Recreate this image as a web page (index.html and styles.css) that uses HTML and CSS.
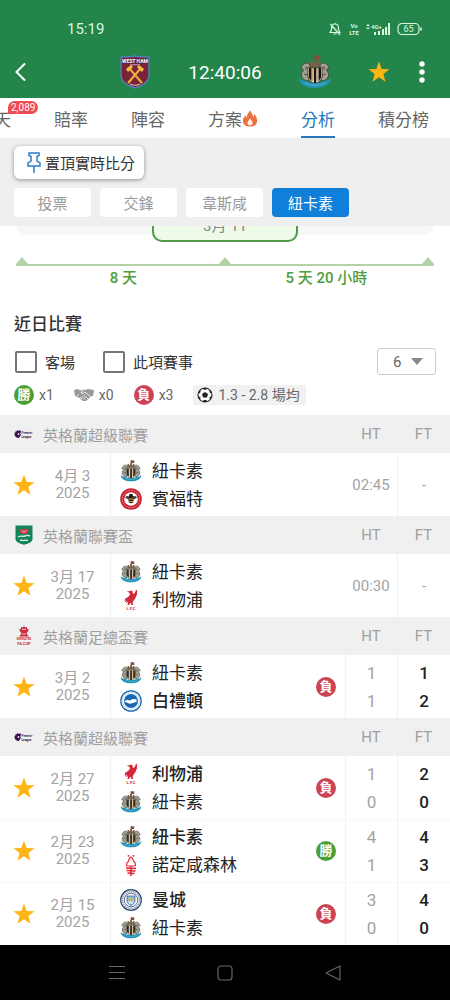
FILE: index.html
```html
<!DOCTYPE html>
<html lang="zh-Hant">

<head>
  <meta charset="UTF-8">
  <meta name="viewport" content="width=device-width, initial-scale=1.0">
  <title>分析</title>
  <link rel="stylesheet" href="styles.css">
</head>

<body>
  <!-- shared icons -->
  <svg class="sprite" aria-hidden="true">
    <symbol id="star" viewBox="0 0 24 24">
      <path d="M12 1.5l2.7 7.4 7.8.3-6.1 4.9 2.1 7.6-6.5-4.4-6.5 4.4 2.1-7.6L1.500 9.200l7.800-.3z" fill="#fdb515" />
    </symbol>

    <symbol id="newcastle" viewBox="0 0 34 34">
      <path d="M17 9V1" stroke="#6d4b32" stroke-width="1.200" />
      <path d="M17 0l6 1-1.500 2 1 1.500L17 5z" fill="#8b4a3a" />
      <path d="M11.500 12V6h2.500v2h1.500V5h3v3H20V6h2.500v6z" fill="#77604a" />
      <path d="M10 26C3 25 2 19 5 16c1-2-1-3-2-2 0-4 5-8 8-5 3 2-1 6 0 9 1 2 2 5-1 8z" fill="#a3a093" stroke="#4c4a42" stroke-width="1" />
      <path d="M24 26c7-1 8-7 5-10-1-2 1-3 2-2 0-4-5-8-8-5-3 2 1 6 0 9-1 2-2 5 1 8z" fill="#a3a093" stroke="#4c4a42" stroke-width="1" />
      <path d="M7 12l2 1-2 2M27 12l-2 1 2 2M6 19l4 1M28 19l-4 1" stroke="#5b4d31" fill="none" />
      <path d="M10 12c5 1 9 1 14 0v9c0 4-3 6-7 8-4-2-7-4-7-8z" fill="#efe5d0" stroke="#222" stroke-width=".8" />
      <path d="M11 13h2.500v13L11 23zM15.800 13h2.500v15h-2.500zM20.500 13H23v10l-2.500 3z" fill="#181512" />
      <path d="M14.600 13v13M19.400 13v13" stroke="#c9924b" stroke-width=".8" />
      <path d="M1 23c2 2 4 3 7 3 5 3 13 3 18 0 3 0 5-1 7-3l-1 4-3 3c-7 4-17 4-24 0l-3-3z" fill="#2493b8" />
      <path d="M7 28c6 3 14 3 20 0" stroke="#8bd3e8" stroke-width=".8" stroke-dasharray="1.500 1" fill="none" />
    </symbol>

    <symbol id="westham" viewBox="0 0 30 34">
      <path d="M1 2c4 0 10 0 14-1 4 1 10 1 14 1v18c0 6-6 11-14 13C7 31 1 26 1 20z" fill="#7a2338" stroke="#4d82b4" stroke-width="1.400" />
      <path d="M2.500 3.500h25V9h-25z" fill="#5b2948" />
      <text x="15" y="8" text-anchor="middle" class="crest-text" fill="#fff">WEST HAM</text>
      <path d="M9 13l13 15M21 13L8 28" stroke="#e9b33c" stroke-width="2" />
      <path d="M6 14l5-4 2 2-5 5zM24 14l-5-4-2 2 5 5z" fill="#f0bd46" />
      <path d="M10 9.800h10" stroke="#d9c5cf" stroke-width=".8" />
      <path d="M10 29c3 1.500 7 1.500 10 0" stroke="#d9b9c2" stroke-width="1.200" fill="none" />
    </symbol>

    <symbol id="brentford" viewBox="0 0 22 22">
      <circle cx="11" cy="11" r="10.800" fill="#c8202f" />
      <circle cx="11" cy="11" r="8.700" fill="none" stroke="#efa9ad" stroke-width=".9" stroke-dasharray="1.200 .8" />
      <circle cx="11" cy="11" r="6.800" fill="#fff" />
      <path d="M5 9c2-2 5-1 6 1 1-2 4-3 6-1-1 2-4 3-6 2-2 1-5 0-6-2z" fill="#4b4542" />
      <path d="M9 8c0-3 4-3 4 0l.5 5c0 3-5 3-5 0z" fill="#211c1a" />
      <path d="M9 11h4M9 13.500h4" stroke="#e9a32c" stroke-width="1" />
    </symbol>

    <!-- liver bird -->
    <symbol id="liverpool" viewBox="0 0 22 22">
      <path d="M8.500 3l2-1.500 2 .8.500 2.700c1.500-.5 2.500-2 3-4.500l1 1-.2 3.500-1.300 4-2.500 3.500-.5 2 .8 1.500h-2l-.5-2-1.300.5-.2 1.500h-2l.8-2-1.100-1.500-1.500-1 1-2.500 2-1.500 1.500-2-.5-1.500z" fill="#d3283a" />
      <path d="M17 2.500l-2.500 4M17 5l-3 3.500M7.500 2.500l2 .5M6 9l-1 3 2 2" stroke="#d3283a" fill="none" stroke-width=".9" />
      <text x="11" y="21" text-anchor="middle" class="lfc-text" fill="#d3283a">L.F.C</text>
    </symbol>

    <symbol id="brighton" viewBox="0 0 22 22">
      <circle cx="11" cy="11" r="10.800" fill="#1464ae" />
      <circle cx="11" cy="11" r="9.600" fill="#fff" />
      <circle cx="11" cy="11" r="8.300" fill="none" stroke="#7eaed9" stroke-width="1" stroke-dasharray="1 .8" />
      <circle cx="11" cy="11" r="7" fill="#1767b4" />
      <path d="M4.500 11l3-1.200c2 1 3 .8 4-.3 2-1 4-.7 6 .2l-2 .8 2 1-3 1c-3 1.500-6 1.500-8 0l-2-1z" fill="#fff" />
    </symbol>

    <symbol id="forest" viewBox="0 0 22 22">
      <circle cx="8.500" cy="1.800" r=".9" fill="#de2530" />
      <circle cx="13.500" cy="1.800" r=".9" fill="#de2530" />
      <path d="M11 3c2 1 2 3 3 5 2 1 2 4 0 4H8c-2 0-2-3 0-4 1-2 1-4 3-5z" fill="#fff" stroke="#de2530" stroke-width="1.200" />
      <path d="M6 13.500c3-1 7 1 10 0v1.500c-3 1-7-1-10 0zM6.500 16c3-1 6 1 9 0v1.500c-3 1-6-1-9 0zM7.500 18.500c2-.6 5 .6 7 0V20c-2 .6-5-.6-7 0z" fill="#de2530" />
      <path d="M11 12.500V22" stroke="#de2530" stroke-width="1.500" />
    </symbol>

    <symbol id="mancity" viewBox="0 0 22 22">
      <circle cx="11" cy="11" r="10.300" fill="#fff" stroke="#29456f" stroke-width="1.200" />
      <circle cx="11" cy="11" r="8.500" fill="none" stroke="#8397b5" stroke-width="1.400" stroke-dasharray="1.400 .7" />
      <circle cx="11" cy="11" r="6.800" fill="#fff" stroke="#29456f" stroke-width=".8" />
      <path d="M7 7h8v5c0 2-2 3.500-4 4.500C9 15.500 7 14 7 12z" fill="#8bbfe2" stroke="#35517b" stroke-width=".7" />
      <path d="M8 9.500h6L13 12H9z" fill="#d7b650" />
      <path d="M8 12.500l5 2M14 12.500l-5 2" stroke="#fff" stroke-width=".8" />
    </symbol>

    <symbol id="premier" viewBox="0 0 40 20">
      <path d="M2 3l3 2 2-3 3 2 3-2 1 5-2 1 2 3-4 7C5 18 1 15 1 10c0-2 1-4 3-4z" fill="#3a1149" />
      <path d="M7 9l3-1 1 3-3 1z" fill="#fff" />
      <text x="15" y="9" class="league-text" fill="#3a1149">Premier</text>
      <text x="15" y="17" class="league-text" fill="#3a1149">League</text>
    </symbol>

    <symbol id="carabao" viewBox="0 0 20 20">
      <path d="M1.500.5h17V14c0 3-4 4.500-8.500 5.700C5.500 18.500 1.500 17 1.500 14z" fill="#11845a" />
      <path d="M5 3.500l2 .7h6l2-.7-1 4-2 1.500H8L6 7.500z" fill="#d83a43" />
      <path d="M8 5.500l2 2 2-2" stroke="#fff" fill="none" stroke-width=".8" />
      <path d="M4 12c3-2 5 0 7-1s3-1 5 0M6 15.500c2-1 3 .5 4 0s2-.5 4 0" stroke="#d3ebe1" stroke-width="1.400" fill="none" />
    </symbol>

    <symbol id="facup" viewBox="0 0 40 40">
      <path d="M20 0l2 3 4-1v4l4 1-3 5-2 2 2 4 3 3H10l3-3 2-4-2-2-3-5 4-1V2l4 1z" fill="#cb2b3b" />
      <path d="M16 7h8M16 16h8" stroke="#fff" stroke-width="1.400" />
      <text x="20" y="28" text-anchor="middle" class="facup-small" fill="#cb2b3b">EMIRATES</text>
      <text x="20" y="37" text-anchor="middle" class="facup-text" fill="#cb2b3b">FA CUP</text>
    </symbol>
  </svg>

  <header class="top">
    <div class="status">
      <span>15:19</span>
      <div class="status-icons">
        <svg width="14" height="14" viewBox="0 0 14 14" fill="none" stroke="#d9f7e0" stroke-width="1.200">
          <path d="M7 2c-2.500 0-3.500 2-3.500 4v2L2 10.500h10L10.500 8V6C10.500 4 9.500 2 7 2zM7 2V1M5.500 12h3M2.500 2l9.500 11" />
        </svg>
        <svg width="12" height="16" viewBox="0 0 12 16" fill="#d9f7e0">
          <text x="6" y="7" text-anchor="middle" class="status-text">Vo</text>
          <text x="6" y="14" text-anchor="middle" class="status-text">LTE</text>
        </svg>
        <svg width="25" height="14" viewBox="0 0 25 14" fill="#d9f7e0">
          <path d="M0 4l2-2 2 2zM0 5.500l2 2 2-2z" />
          <text x="5" y="7" class="status-text">4G+</text>
          <path d="M8 10h2v3H8zM12 9h2v4h-2zM16 7h2v6h-2zM19 5h2v8h-2zM22 1h2v12h-2z" />
        </svg>
        <svg width="25" height="14" viewBox="0 0 25 14" fill="none" stroke="#d9f7e0" stroke-width="1.200">
          <rect x="1" y="1.500" width="21" height="11" rx="4" />
          <path d="M24 5.500v3" stroke-width="1.500" />
          <text x="11.500" y="10" text-anchor="middle" class="battery-text" fill="#d9f7e0" stroke="none">65</text>
        </svg>
      </div>
    </div>

    <div class="appbar">
      <button class="icon-btn back" aria-label="返回">
        <svg width="12" height="20" viewBox="0 0 12 20" fill="none" stroke="#fff" stroke-width="2">
          <path d="M10 1.500L1.500 10l8.500 8.500" />
        </svg>
      </button>
      <div class="fixture">
        <svg class="crest-lg"><use href="#westham" /></svg>
        <span class="clock">12:40:06</span>
        <svg class="crest-lg"><use href="#newcastle" /></svg>
      </div>
      <div class="actions">
        <button class="icon-btn" aria-label="收藏"><svg width="24" height="24"><use href="#star" /></svg></button>
        <button class="icon-btn" aria-label="更多">
          <svg width="26" height="24" viewBox="0 0 26 24" fill="#fff">
            <circle cx="13" cy="4" r="2.700" />
            <circle cx="13" cy="12" r="2.700" />
            <circle cx="13" cy="20" r="2.700" />
          </svg>
        </button>
      </div>
    </div>
  </header>

  <nav class="tabs">
    <a href="#" class="tab">聊天<span class="count">2,089</span></a>
    <a href="#" class="tab">賠率</a>
    <a href="#" class="tab">陣容</a>
    <a href="#" class="tab">方案<svg width="16" height="18" viewBox="0 0 16 18">
        <path d="M8 1c1 3 3 4 3 7 1-1 1.500-2 1.500-3 2 3 3 5 2.500 8-.7 3-3 4.500-7 4.500S1.500 16 1 13c-.4-3 1-5 2.500-7 0 2 .5 2.500 1 3C4.500 5.500 7 4 8 1z" fill="#ee7040" />
        <path d="M8 9c.5 2 3 3 2.500 5.500C10 17 6 17 5.500 14.500 5.200 12.500 7.500 11 8 9z" fill="#fff2e6" />
      </svg></a>
    <a href="#" class="tab active">分析</a>
    <a href="#" class="tab">積分榜</a>
  </nav>

  <div class="pinned">
    <button class="pin-btn">
      <svg width="16" height="22" viewBox="0 0 16 22" fill="none" stroke="#2a7ec6" stroke-width="1.500">
        <path d="M3 1h10v2.500l-2 1V9l3 2v3H2v-3l3-2V4.500l-2-1zM8 14v7" />
      </svg>
      置頂實時比分
    </button>
    <div class="chips">
      <button class="chip">投票</button>
      <button class="chip">交鋒</button>
      <button class="chip">韋斯咸</button>
      <button class="chip selected">紐卡素</button>
    </div>
  </div>

  <main>
    <section class="schedule">
      <div class="cards">
        <div class="card-strip"></div>
        <div class="card-now">3月 11</div>
      </div>
      <div class="line">
        <span class="mark"></span>
        <span class="mark"></span>
        <span class="mark"></span>
      </div>
      <div class="gaps">
        <span>8 天</span>
        <span>5 天 20 小時</span>
      </div>
    </section>

    <section class="recent">
      <h2>近日比賽</h2>
      <form class="filters">
        <label><input type="checkbox">客場</label>
        <label><input type="checkbox">此項賽事</label>
        <div class="select">
          <select aria-label="場數">
            <option>6</option>
            <option>10</option>
            <option>20</option>
          </select>
        </div>
      </form>
      <div class="stats">
        <span class="stat"><b class="result win">勝</b>x1</span>
        <span class="stat">
          <svg width="20" height="14" viewBox="0 0 20 14">
            <path d="M0 2l4-1 2 1.500L9 1.500 11 2l3-1 6 1-1 6-2 .5-5 4.500-3 0-5-4L1 8z" fill="#999" />
            <path d="M9 2L7 5c1.500 1 3 0 4-1l6 5M3 8l2-2M10 7l4 4M8 8l3 3.500M6 9l2 2" stroke="#fff" stroke-width=".8" fill="none" />
          </svg>x0</span>
        <span class="stat"><b class="result loss">負</b>x3</span>
        <span class="stat average">
          <svg width="16" height="16" viewBox="0 0 16 16">
            <circle cx="8" cy="8" r="7" fill="#fff" stroke="#333" stroke-width="1.200" />
            <path d="M8 5l3 2-1 3.500H6L5 7zM5 1.500L8 3l3-1.500L8 .8zM1 6.500L3 6l1-3-2.200 1.500zM15 6.500L13 6l-1-3 2.200 1.500zM3 13l.5-3-2.200-.5zM13 13l-.5-3 2.200-.5zM6 15l.5-2h3l.5 2z" fill="#222" />
          </svg>1.3 - 2.8 場均</span>
      </div>
    </section>

    <table class="matches">
      <colgroup>
        <col class="col-star">
        <col class="col-date">
        <col>
        <col class="col-result">
        <col class="col-ht">
        <col class="col-ft">
      </colgroup>
      <tbody>
        <tr class="league">
          <th colspan="4"><div class="league-name"><svg><use href="#premier" /></svg>英格蘭超級聯賽</div></th>
          <th>HT</th>
          <th>FT</th>
        </tr>
        <tr class="match">
          <td><button class="icon-btn" aria-label="收藏"><svg width="24" height="24"><use href="#star" /></svg></button></td>
          <td class="date">4月 3<br>2025</td>
          <td class="teams">
            <div class="team"><svg><use href="#newcastle" /></svg>紐卡素</div>
            <div class="team"><svg><use href="#brentford" /></svg>賓福特</div>
          </td>
          <td></td>
          <td class="time">02:45</td>
          <td class="ft none">-</td>
        </tr>
      </tbody>
      <tbody>
        <tr class="league">
          <th colspan="4"><div class="league-name"><svg><use href="#carabao" /></svg>英格蘭聯賽盃</div></th>
          <th>HT</th>
          <th>FT</th>
        </tr>
        <tr class="match">
          <td><button class="icon-btn" aria-label="收藏"><svg width="24" height="24"><use href="#star" /></svg></button></td>
          <td class="date">3月 17<br>2025</td>
          <td class="teams">
            <div class="team"><svg><use href="#newcastle" /></svg>紐卡素</div>
            <div class="team"><svg><use href="#liverpool" /></svg>利物浦</div>
          </td>
          <td></td>
          <td class="time">00:30</td>
          <td class="ft none">-</td>
        </tr>
      </tbody>
      <tbody>
        <tr class="league">
          <th colspan="4"><div class="league-name"><svg><use href="#facup" /></svg>英格蘭足總盃賽</div></th>
          <th>HT</th>
          <th>FT</th>
        </tr>
        <tr class="match">
          <td><button class="icon-btn" aria-label="收藏"><svg width="24" height="24"><use href="#star" /></svg></button></td>
          <td class="date">3月 2<br>2025</td>
          <td class="teams">
            <div class="team"><svg><use href="#newcastle" /></svg>紐卡素</div>
            <div class="team winner"><svg><use href="#brighton" /></svg>白禮頓</div>
          </td>
          <td><b class="result loss">負</b></td>
          <td class="ht">1<br>1</td>
          <td class="ft">1<br>2</td>
        </tr>
      </tbody>
      <tbody>
        <tr class="league">
          <th colspan="4"><div class="league-name"><svg><use href="#premier" /></svg>英格蘭超級聯賽</div></th>
          <th>HT</th>
          <th>FT</th>
        </tr>
        <tr class="match">
          <td><button class="icon-btn" aria-label="收藏"><svg width="24" height="24"><use href="#star" /></svg></button></td>
          <td class="date">2月 27<br>2025</td>
          <td class="teams">
            <div class="team winner"><svg><use href="#liverpool" /></svg>利物浦</div>
            <div class="team"><svg><use href="#newcastle" /></svg>紐卡素</div>
          </td>
          <td><b class="result loss">負</b></td>
          <td class="ht">1<br>0</td>
          <td class="ft">2<br>0</td>
        </tr>
        <tr class="match">
          <td><button class="icon-btn" aria-label="收藏"><svg width="24" height="24"><use href="#star" /></svg></button></td>
          <td class="date">2月 23<br>2025</td>
          <td class="teams">
            <div class="team winner"><svg><use href="#newcastle" /></svg>紐卡素</div>
            <div class="team"><svg><use href="#forest" /></svg>諾定咸森林</div>
          </td>
          <td><b class="result win">勝</b></td>
          <td class="ht">4<br>1</td>
          <td class="ft">4<br>3</td>
        </tr>
        <tr class="match">
          <td><button class="icon-btn" aria-label="收藏"><svg width="24" height="24"><use href="#star" /></svg></button></td>
          <td class="date">2月 15<br>2025</td>
          <td class="teams">
            <div class="team winner"><svg><use href="#mancity" /></svg>曼城</div>
            <div class="team"><svg><use href="#newcastle" /></svg>紐卡素</div>
          </td>
          <td><b class="result loss">負</b></td>
          <td class="ht">3<br>0</td>
          <td class="ft">4<br>0</td>
        </tr>
      </tbody>
    </table>
  </main>

  <footer class="navbar">
    <button class="icon-btn" aria-label="選單">
      <svg width="20" height="20" viewBox="0 0 20 20" stroke="#666" stroke-width="1.200"><path d="M2 3.500h16M2 9.500h16M2 15.500h16" /></svg>
    </button>
    <button class="icon-btn" aria-label="主頁">
      <svg width="20" height="20" viewBox="0 0 20 20" stroke="#666" stroke-width="1.200" fill="none"><rect x="3" y="3" width="14" height="14" rx="3" /></svg>
    </button>
    <button class="icon-btn" aria-label="後退">
      <svg width="20" height="20" viewBox="0 0 20 20" stroke="#666" stroke-width="1.200" fill="none" stroke-linejoin="round"><path d="M17 3v14L3 10z" /></svg>
    </button>
  </footer>
</body>

</html>
```
FILE: styles.css
```css
* {
  padding: 0;
  margin: 0;
  box-sizing: border-box;
}

body {
  display: flex;
  flex-direction: column;
  min-height: 100vh;
  font-family: Roboto, "Noto Sans CJK TC", sans-serif;
  font-size: 15px;
  background-color: white;
  color: #333;
  overflow-x: hidden;
}

button,
input,
select {
  font: inherit;
  color: inherit;
}

button {
  border: none;
  background: none;
  cursor: pointer;
}

svg {
  display: block;
  flex: none;
}

.sprite {
  position: absolute;
  width: 0;
  height: 0;
}

.icon-btn {
  display: flex;
}

/* header */
.top {
  background-color: #238549;
  color: white;
}

.status {
  display: flex;
  justify-content: space-between;
  align-items: center;
  height: 46px;
  padding: 12px 28px 0 67px;
  color: #d9f7e0;
}

.status-icons {
  display: flex;
  align-items: center;
  gap: 6px;
}

.status-text {
  font-size: 6px;
  font-weight: bold;
}

.battery-text {
  font-size: 9px;
}

.appbar {
  display: grid;
  grid-template-columns: 1fr auto 1fr;
  align-items: center;
  height: 52px;
  padding: 0 15px;
}

.fixture {
  display: flex;
  align-items: center;
  gap: 36px;
}

.crest-lg {
  width: 34px;
  height: 34px;
}

.crest-text {
  font-size: 5px;
  font-weight: bold;
}

.clock {
  font-size: 19px;
}

.actions {
  display: flex;
  justify-content: flex-end;
  gap: 18px;
}

/* tabs */
.tabs {
  display: flex;
  justify-content: flex-end;
  gap: 43px;
  height: 40px;
  padding: 0 21px 0 0;
  overflow: hidden;
}

.tab {
  position: relative;
  display: flex;
  flex: none;
  align-items: center;
  border-top: 2px solid transparent;
  border-bottom: 2px solid transparent;
  color: #666;
  font-size: 17px;
  text-decoration: none;
}

.tab.active {
  border-bottom-color: #2878be;
  color: #2878be;
}

.count {
  position: absolute;
  top: 1px;
  left: 31px;
  padding: 0 3px;
  border-radius: 7px 7px 7px 0;
  background-color: #f04a54;
  color: white;
  font-size: 10px;
  line-height: 13px;
}

/* pinned bar */
.pinned {
  padding: 8px 14px 9px;
  background-color: #efefef;
}

.pin-btn {
  display: flex;
  align-items: center;
  gap: 3px;
  height: 33px;
  padding: 0 9px 0 12px;
  border-radius: 6px;
  background-color: white;
  box-shadow: 0 1px 4px rgba(0, 0, 0, .4);
}

.chips {
  display: flex;
  gap: 9px;
  margin-top: 9px;
}

.chip {
  width: 77px;
  height: 29px;
  border-radius: 4px;
  background-color: white;
  color: #999;
}

.chip.selected {
  background-color: #107fda;
  color: white;
}

/* schedule */
main {
  flex: 1;
}

.schedule {
  padding: 0 16px;
}

/* cards are scrolled up, only their lower edge shows */
.cards {
  display: grid;
  grid-template-rows: 16px;
  align-items: end;
  overflow: hidden;
}

.card-strip,
.card-now {
  grid-area: 1 / 1;
  height: 36px;
}

.card-strip {
  margin-bottom: 7px;
  border-radius: 10px;
  background-color: #f7f7f7;
}

.card-now {
  justify-self: center;
  width: 146px;
  border: 2px solid #4f9a45;
  border-radius: 10px;
  background-color: #eefbe9;
  color: #888;
  text-align: center;
  line-height: 36px;
}

.line {
  display: flex;
  justify-content: space-between;
  margin-top: 15px;
  border-bottom: 2px solid #b3d3a6;
}

.mark {
  border: 6px solid transparent;
  border-top: none;
  border-bottom: 7px solid #b3d3a6;
}

.gaps {
  display: grid;
  grid-template-columns: 1fr 1fr;
  padding: 2px 6px 0;
  color: #509d3c;
  font-weight: 500;
  line-height: 20px;
  text-align: center;
}

/* filters */
.recent {
  padding: 24px 14px 10px;
}

h2 {
  font-size: 17px;
  font-weight: 500;
  line-height: 24px;
}

.filters {
  display: flex;
  align-items: center;
  gap: 27px;
  margin-top: 12px;
}

.filters label {
  display: flex;
  align-items: center;
  gap: 8px;
}

.filters input {
  appearance: none;
  width: 22px;
  height: 22px;
  margin-left: 1px;
  border: 2px solid #757575;
  border-radius: 2px;
}

.filters input:checked {
  background-color: #107fda;
}

.select {
  position: relative;
  margin-left: auto;
}

.select::after {
  content: "";
  position: absolute;
  right: 13px;
  top: 10px;
  border: 6px solid transparent;
  border-top: 7px solid #888;
  border-bottom: none;
  pointer-events: none;
}

select {
  display: block;
  appearance: none;
  width: 59px;
  height: 27px;
  padding: 0 15px;
  border: 1px solid #ccc;
  border-radius: 3px;
  background-color: white;
  color: #666;
}

.stats {
  display: flex;
  align-items: center;
  gap: 20px;
  margin-top: 10px;
  color: #666;
  font-size: 14px;
  line-height: 20px;
}

.stat {
  display: flex;
  align-items: center;
  gap: 5px;
}

.average {
  padding: 0 6px 0 4px;
  border-radius: 2px;
  background-color: #f1f1f1;
}

.result {
  display: block;
  width: 20px;
  height: 20px;
  border-radius: 50%;
  color: white;
  font-size: 13px;
  line-height: 20px;
  text-align: center;
}

.win {
  background-color: #4a9e36;
}

.loss {
  background-color: #cc4454;
}

/* matches */
.matches {
  width: 100%;
  table-layout: fixed;
  border-collapse: separate;
  border-spacing: 0;
}

.col-star {
  width: 37px;
}

.col-date {
  width: 73px;
}

.col-result {
  width: 29px;
}

.col-ht {
  width: 52px;
}

.col-ft {
  width: 53px;
}

.league th {
  height: 38px;
  background-color: #f0f0f0;
  color: #a0a0a0;
  font-weight: normal;
}

.league-name {
  display: flex;
  align-items: center;
  gap: 9px;
  padding-left: 14px;
}

.league-name svg {
  width: 20px;
  height: 20px;
}

.league-text {
  font-size: 6px;
  font-weight: bold;
}

.facup-text {
  font-size: 8px;
  font-weight: bold;
}

.facup-small {
  font-size: 6px;
  font-weight: bold;
}

.match td {
  height: 63px;
}

.match + .match td {
  border-top: 1px solid #f7f7f7;
}

.match .icon-btn {
  margin-left: 12px;
}

.match .date {
  padding-right: 2px;
  color: #a3a3a3;
  line-height: 17px;
  text-align: center;
}

.teams {
  padding-left: 9px;
  border-left: 1px solid #f0f0f0;
}

.team {
  display: flex;
  align-items: center;
  gap: 10px;
  color: #222;
  font-size: 17px;
  line-height: 28px;
  white-space: nowrap;
}

.team svg {
  width: 22px;
  height: 22px;
}

.lfc-text {
  font-size: 4px;
  font-weight: bold;
}

.winner {
  font-weight: 500;
}

.time {
  color: #a3a3a3;
  text-align: center;
}

.ht,
.ft {
  border-left: 1px solid #f0f0f0;
  font-size: 17px;
  line-height: 28px;
  text-align: center;
}

.ht {
  color: #a3a3a3;
}

.ft {
  color: #222;
  font-weight: 500;
}

.none {
  color: #a3a3a3;
  font-size: 15px;
  font-weight: normal;
}

/* system navigation */
.navbar {
  display: flex;
  justify-content: center;
  align-items: center;
  gap: 88px;
  height: 55px;
  background-color: black;
}
```
